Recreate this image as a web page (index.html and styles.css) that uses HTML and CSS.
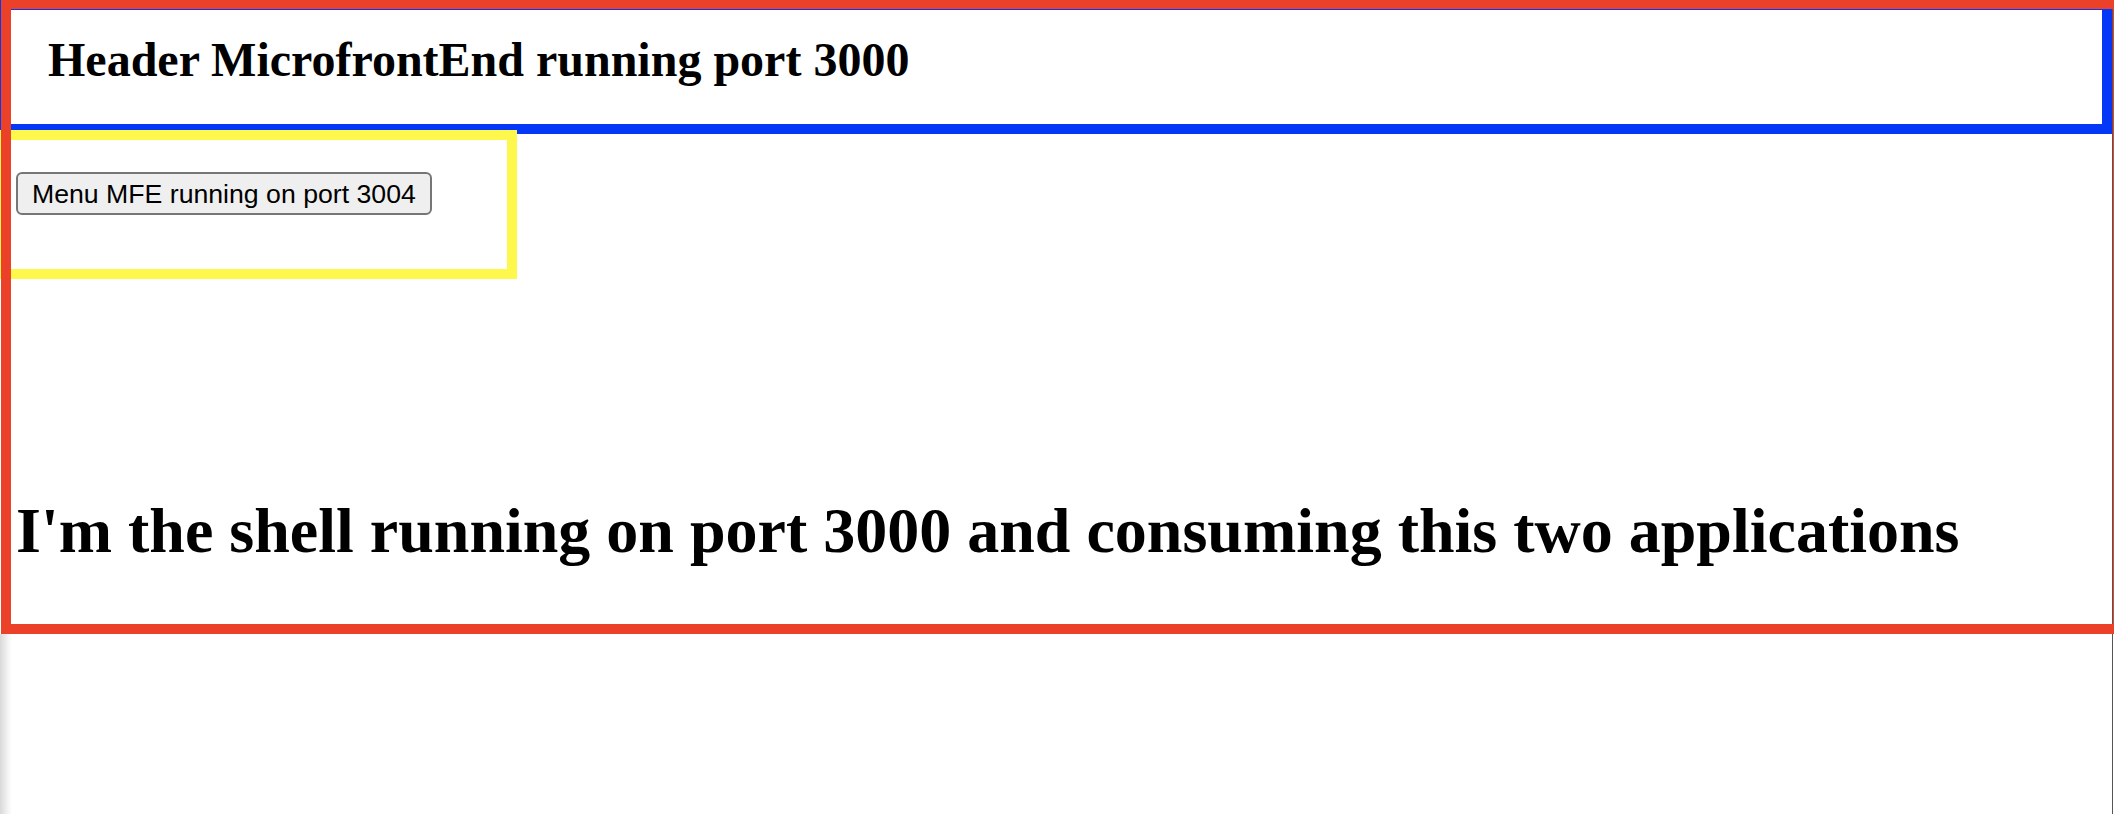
FILE: index.html
```html
<!DOCTYPE html>
<html lang="en">
<head>
<meta charset="utf-8">
<title>Shell</title>
<link rel="stylesheet" href="styles.css">
</head>
<body>
<div class="page">
  <div class="shell">
    <header class="header-mfe">
      <h2 class="header-title">Header MicrofrontEnd running port 3000</h2>
    </header>
    <nav class="menu-mfe">
      <button class="menu-button" type="button">Menu MFE running on port 3004</button>
    </nav>
    <main class="shell-content">
      <h1 class="shell-title">I'm the shell running on port 3000 and consuming this two applications</h1>
    </main>
    <div class="window-edge"></div>
    <div class="shell-frame"></div>
  </div>
</div>
</body>
</html>
```

FILE: styles.css
```css
html, body {
  margin: 0;
  padding: 0;
  overflow: hidden;
}

body {
  width: 2114px;
  height: 814px;
  background: linear-gradient(to right, #d9d9d9 0, #f4f4f4 8px, #ffffff 12px) 0 634px / 12px 180px no-repeat, #ffffff;
  font-family: "Liberation Serif", "Times New Roman", serif;
  color: #000;
}

.page {
  width: 2114px;
  height: 814px;
  overflow: hidden;
}

.shell {
  position: relative;
  height: 634px;
  width: 2114px;
}

.header-mfe {
  box-sizing: border-box;
  width: 2112px;
  height: 134px;
  border: 10px solid #0538f6;
  padding: 22px 0 0 38px;
  background: #fff;
}

.header-title {
  margin: 0;
  font-size: 48px;
  line-height: 55px;
  font-weight: bold;
}

.menu-mfe {
  position: relative;
  box-sizing: border-box;
  width: 517px;
  height: 149px;
  margin-top: -4px;
  border: 10px solid #fef84c;
  padding: 32px 0 0 6px;
  background: #fff;
}

.menu-button {
  box-sizing: border-box;
  height: 43px;
  padding: 0 14px;
  border: 2px solid #767676;
  border-radius: 6px;
  background: #efefef;
  font-family: "Liberation Sans", Arial, sans-serif;
  font-size: 26.67px;
  line-height: 30px;
  color: #000;
}

.shell-content {
  padding-top: 215px;
}

.shell-title {
  margin: 0 0 0 16px;
  font-size: 64px;
  line-height: 74px;
  font-weight: bold;
  white-space: nowrap;
}

.window-edge {
  position: absolute;
  left: 2112px;
  top: 0;
  width: 1px;
  height: 814px;
  background: #555;
}

.shell-frame {
  position: absolute;
  left: 1px;
  top: 0;
  width: 2122px;
  height: 634px;
  box-sizing: border-box;
  border: 10px solid #ea4128;
  border-top-width: 9px;
  pointer-events: none;
}
```
